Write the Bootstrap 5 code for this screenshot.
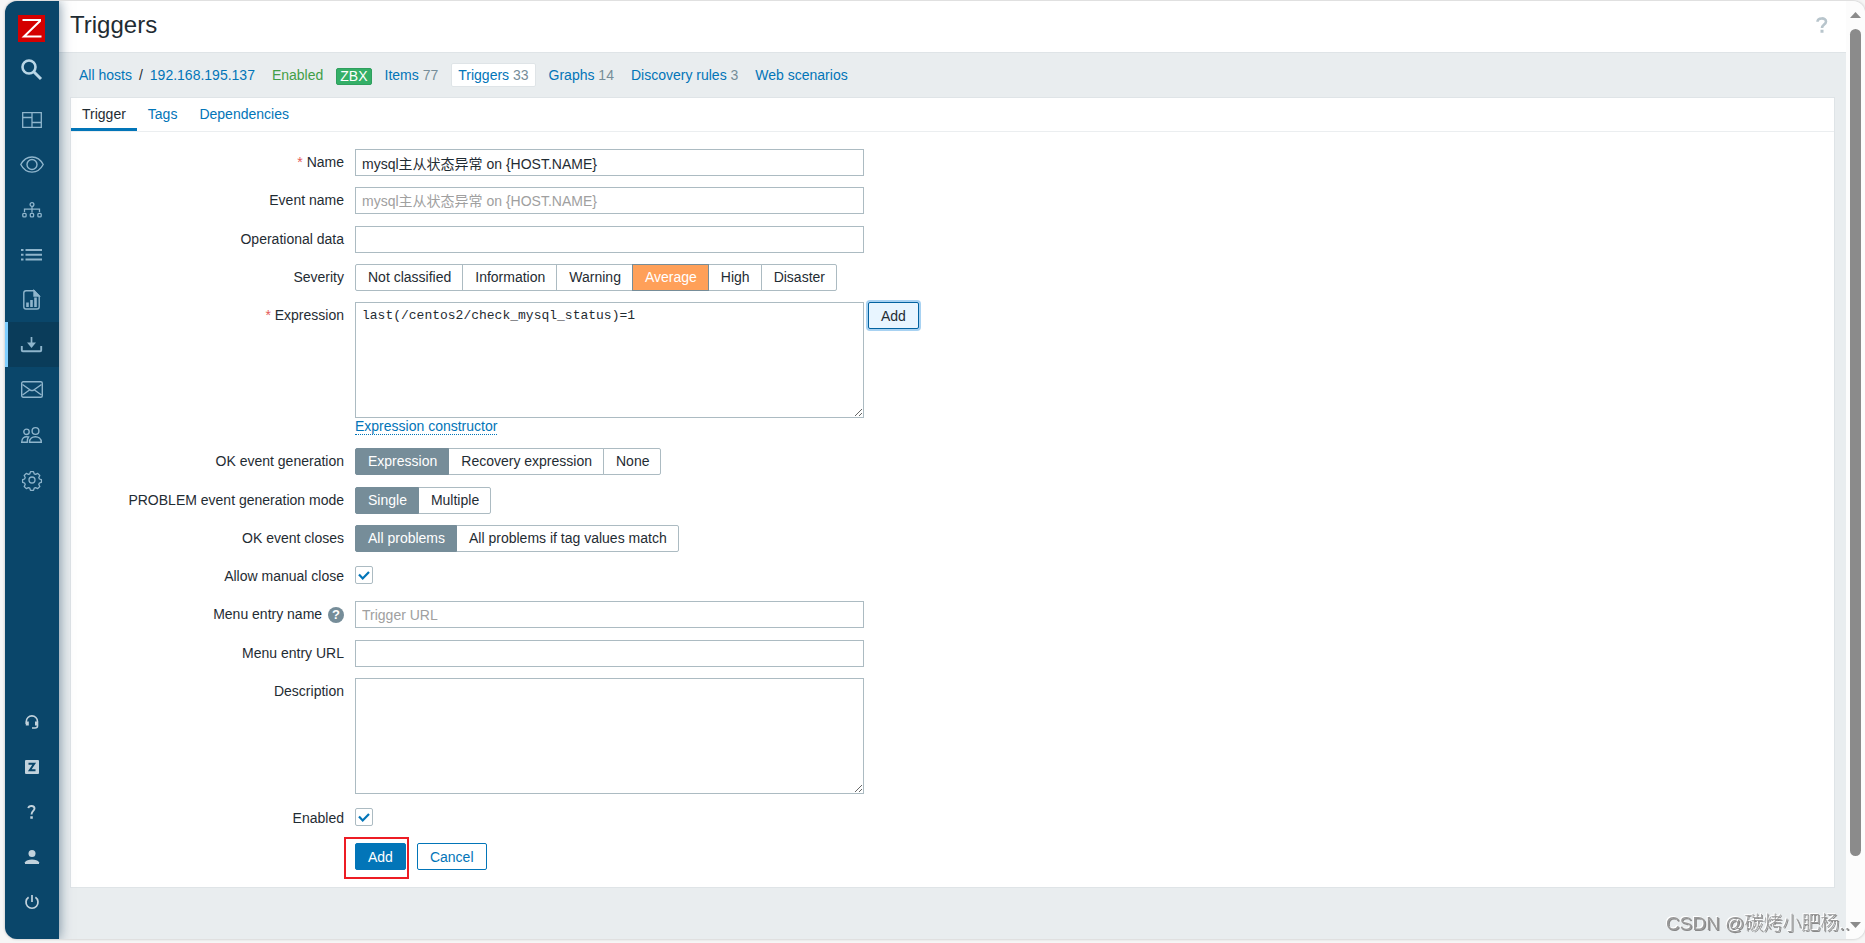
<!DOCTYPE html>
<html lang="en">
<head>
<meta charset="utf-8">
<meta name="viewport" content="width=device-width, initial-scale=1">
<title>Triggers</title>
<link href="https://cdn.jsdelivr.net/npm/bootstrap@5.3.0/dist/css/bootstrap.min.css" rel="stylesheet">
<style>
:root{--zx-blue:#0275b8;--zx-line:#acbbc2;--zx-text:#1f2c33;--zx-bg:#e9edef}
body{background:#f6f6f6;font-family:"Liberation Sans","Noto Sans CJK SC",sans-serif;font-size:14px;line-height:18px;color:var(--zx-text);overflow:hidden}
a{color:var(--zx-blue);text-decoration:none}
.zx-shell{padding:1px 0 4px 5px}
.zx-window{border-radius:12px;overflow:hidden;box-shadow:0 0 3px rgba(0,0,0,.25);background:var(--zx-bg)}
.zx-side{width:54px;flex:none;background:#0a466a;color:#8fb5cc;box-shadow:0 0 12px rgba(10,50,80,.55);z-index:2;padding:14px 0 15px}
.zx-side a{height:45px;color:inherit;display:flex;align-items:center;justify-content:center;border-left:3px solid transparent;padding-right:4px}
.zx-side a.active{background:#0a3c5a;border-left-color:#80cfff}
.zx-side a.zx-logo{height:27px}
.zx-side a.zx-find{height:55px;color:#b9d6e6}
.zx-side svg{display:block;overflow:visible}
.zx-low{color:#c2d2dc}
.zx-main-col{min-width:0}
.zx-head{height:52px;border-bottom:1px solid #dfe4e7;background:#fff;padding:0 18px 4px 11px}
.zx-head h1{font-size:24px;line-height:30px;font-weight:400}
.zx-crumbs{height:44px;padding:0 16px 0 16px;gap:9px}
.zx-crumbs>a,.zx-crumbs>span{padding:2px 3px;border:1px solid transparent}
.zx-path{gap:7px}
.zx-crumbs .zx-on{background:#fff;border:1px solid #dfe4e7;border-radius:2px;padding:2px 6px}
.zx-num{color:#768d99}
.zx-green{color:#429e47}
.zx-crumbs>.zx-zbx{background:#34af67;border:1px solid #2f9f5e;border-radius:2px;color:#fff;line-height:15px;padding:0 3px;margin-top:3px}
.zx-panel{background:#fff;border:1px solid #dfe4e7;margin:0 11px 51px 11px;padding-bottom:17px}
.zx-tabs{border-bottom:1px solid #ebeef0;height:34px}
.zx-tabs .nav-link{padding:7px 11px 5px;color:var(--zx-blue);border-bottom:3px solid transparent}
.zx-tabs .nav-link.active{color:var(--zx-text);border-color:var(--zx-blue)}
.zx-form{padding-top:17px}
.zx-group{display:flex;flex-direction:column;gap:11px;margin-bottom:12px}
.zx-group:last-child{margin-bottom:0}
.zx-row{display:flex;gap:11px;align-items:flex-start}
.zx-row>.zx-lab{flex:0 0 273px;text-align:right;line-height:18px;padding:4px 0 5px}
.zx-star{color:#e45959}
.zx-field{width:509px;max-width:100%;height:27px;padding:3px 6px;font-size:14px;line-height:18px;border:1px solid var(--zx-line);border-radius:0;color:var(--zx-text);background:#fff}
.zx-field::placeholder{color:#a0a0a0;opacity:1}
textarea.zx-field{height:116px;display:block;resize:both;padding-top:4px}
.zx-code{font-family:"Liberation Mono",monospace;font-size:13px}
.zx-seg .btn{font-size:14px;line-height:18px;height:27px;padding:3px 11px 3px 12px;border:1px solid var(--zx-line);border-radius:2px;color:var(--zx-text);background:#fff}
.zx-seg .btn-check:checked+.btn{background:#768d99;border-color:#768d99;color:#fff}
.zx-seg .btn-check:checked+.btn.zx-avg{background:#ffa059;border-color:#768d99}
.zx-btn{font-size:14px;line-height:18px;height:27px;padding:3px 12px;border-radius:2px;border:1px solid var(--zx-blue);color:var(--zx-blue);background:#fff}
.zx-btn.zx-main{background:var(--zx-blue);color:#fff}
.zx-btn.zx-focus{background:#e8f5ff;border-color:#0262a0;color:var(--zx-text);box-shadow:0 0 0 2px #a8d2f2}
.zx-actions{gap:11px}
.zx-dots{display:block;width:fit-content;border-bottom:1px dotted var(--zx-blue);line-height:16px;margin-bottom:1px}
.zx-tick{appearance:none;width:18px;height:18px;margin:3px 0 6px;border:1px solid var(--zx-line);border-radius:2px;background:#fff}
.zx-tick:checked{background:#fff url("data:image/svg+xml,%3Csvg xmlns='http://www.w3.org/2000/svg' viewBox='0 0 16 16'%3E%3Cpath d='M3 7.5l3.700 4L13 5' fill='none' stroke='%230275b8' stroke-width='2.200'/%3E%3C/svg%3E") center/16px}
.zx-help{display:inline-block;width:16px;height:16px;line-height:16px;border-radius:50%;background:#768d99;color:#fff;font-weight:700;font-size:13px;text-align:center;margin-left:2px}
.zx-marked{position:relative}
.zx-marked::before{content:"";position:absolute;inset:-6px -3px -9px -11px;border:2px solid #ed1c24;pointer-events:none}
.zx-scroll{flex:none;width:19px;background:#fcfcfc;padding:11px 4px}
.zx-thumb{flex:0 1 827px;width:11px;margin-top:11px;border-radius:6px;background:#8b8b8b}
.zx-wm{position:fixed;right:15px;bottom:6px;font:300 19px/26px "Liberation Sans","Noto Sans CJK SC",sans-serif;color:#999;text-shadow:-1px -1px 0 #fff,1px 1px 0 #888;z-index:5}
</style>
</head>
<body>
<div class="zx-shell vh-100">
<div class="zx-window d-flex h-100">
  <nav class="zx-side d-flex flex-column" aria-label="Main">
    <a class="zx-logo" href="#" aria-label="Home"><svg width="27" height="27"><path fill="#d40000" d="M0 0h27v27H0z"/><path d="M4.500 5h17.500v1L6 21.500h17.500" fill="none" stroke="#fff" stroke-width="2"/></svg></a>
    <a class="zx-find" href="#" aria-label="Search"><svg width="21" height="21" fill="none" stroke="currentColor"><circle cx="8" cy="8" r="6.500" stroke-width="2.600"/><path d="M13 13l7 7" stroke-width="3"/></svg></a>
    <a href="#" aria-label="Dashboards"><svg width="20" height="16" fill="none" stroke="currentColor" stroke-width="1.300"><path d="M.7.700h18.600v14.600H.700zM10 .7v14.600M.7 5.500H10M10 10.500h9.300"/></svg></a>
    <a href="#" aria-label="Monitoring"><svg width="24" height="17" fill="none" stroke="currentColor" stroke-width="1.400"><path d="M.8 8.500C6-1.600 18-1.600 23.200 8.500 18 18.600 6 18.600.8 8.500z"/><circle cx="12" cy="8.500" r="5"/></svg></a>
    <a href="#" aria-label="Services"><svg width="20" height="16" fill="none" stroke="currentColor" stroke-width="1.300"><circle cx="10" cy="2.500" r="1.900"/><path d="M10 4.500v6M2.500 10V7.200h15V10"/><rect x=".8" y="11.300" width="3.300" height="3.600" rx="1"/><rect x="8.300" y="11.300" width="3.300" height="3.600" rx="1"/><rect x="15.900" y="11.300" width="3.300" height="3.600" rx="1"/></svg></a>
    <a href="#" aria-label="Inventory"><svg width="21" height="12" fill="currentColor"><path d="M0 0h2.500v2H0zM4.500 0H21v2H4.500zM0 4.700h2.500v2H0zM4.500 4.700H21v2H4.500zM0 9.500h2.500v2H0zM4.500 9.500H21v2H4.500z"/></svg></a>
    <a href="#" aria-label="Reports"><svg width="17" height="20" fill="none" stroke="currentColor" stroke-width="1.400"><path d="M11 .8H3Q.8.800.8 3v13.800Q.8 19 3 19h11q2.200 0 2.200-2.200V6z"/><path d="M11 .8V6h5.200z" fill="currentColor"/><path d="M4.500 12.500v4.500M8.500 10v7M12.500 7.500V17" stroke-width="2.600"/></svg></a>
    <a class="active" href="#" aria-label="Data collection"><svg width="21" height="16" fill="none" stroke="currentColor"><path d="M.8 9v4.300q0 1 1 1h17.400q1 0 1-1V9" stroke-width="1.900"/><path d="M10.500 0v7" stroke-width="1.700"/><path d="M6 5.500h9l-4.500 5.500z" fill="currentColor" stroke="none"/></svg></a>
    <a href="#" aria-label="Alerts"><svg width="22" height="17" fill="none" stroke="currentColor" stroke-width="1.400"><rect x=".7" y=".7" width="20.600" height="15.600" rx="1.500"/><path d="M1.500 3.500l8.500 6h2l8.500-6M1.500 14l7-5M20.500 14l-7-5"/></svg></a>
    <a href="#" aria-label="Users"><svg width="21" height="16" fill="none" stroke="currentColor" stroke-width="1.400"><circle cx="14.500" cy="4" r="3.400"/><circle cx="5.500" cy="4.800" r="2.700"/><path d="M8.500 15.200C8.500 8 20.300 8 20.300 15.200zM7.500 10C3 9.200.7 11 .7 15.200h5.500q0-3.500 1.300-5.200z"/></svg></a>
    <a href="#" aria-label="Administration"><svg width="18" height="18" viewBox="-9 -9 18 18" fill="none" stroke="currentColor" stroke-width="1.300" stroke-linejoin="round"><circle r="3"/><path d="M-1.500-8.400h3l.7 2.200 1.400.6 2.100-1 2.100 2.100-1 2 .6 1.500 2 .7v2.600l-2 .7-.6 1.500 1 2-2.100 2.100-2.100-1-1.400.6-.7 2.200h-3l-.7-2.200-1.400-.6-2.100 1-2.100-2.100 1-2-.6-1.500-2-.7v-2.600l2-.7.6-1.500-1-2 2.100-2.100 2.100 1 1.400-.6z"/></svg></a>
    <div class="zx-low mt-auto">
      <a href="#" aria-label="Support"><svg width="14" height="14" fill="none" stroke="currentColor" stroke-width="1.600"><path d="M1.300 9V6.500a5.500 5.500 0 0 1 11.200 0V11q0 2-2.500 2H7"/><path d="M2.300 6.500v4M11.500 6.500v4" stroke-width="3"/></svg></a>
      <a href="#" aria-label="Integrations"><svg width="14" height="14"><rect width="14" height="14" rx="1" fill="currentColor"/><path d="M3.500 3.800h5.700L4.800 10.300h5.700" fill="none" stroke="#0a466a" stroke-width="2"/></svg></a>
      <a href="#" aria-label="Help"><svg width="9" height="14" fill="none" stroke="currentColor" stroke-width="1.900"><path d="M1.300 3.200C1.800.3 7.500.2 7.500 3.600 7.500 6 4.500 6 4.500 9.500"/><path d="M3.300 12.500h2.500" stroke-width="2.400"/></svg></a>
      <a href="#" aria-label="User profile"><svg width="14" height="14" fill="currentColor"><circle cx="7" cy="3.500" r="3.500"/><path d="M0 14v-1.800C1.500 8.500 12.500 8.500 14 12.200V14z"/></svg></a>
      <a href="#" aria-label="Sign out"><svg width="14" height="14" fill="none" stroke="currentColor" stroke-width="1.700"><path d="M7 0v7M3.600 2.300a6 6 0 1 0 6.800 0"/></svg></a>
    </div>
  </nav>

  <main class="zx-main-col flex-grow-1">
    <header class="zx-head d-flex align-items-center justify-content-between">
      <h1 class="m-0">Triggers</h1>
      <a href="#" aria-label="Help"><svg class="d-block" width="12" height="16" fill="none" stroke="#b8c5cc" stroke-width="2.600"><path d="M1.500 4.800C1.500.4 10 .3 10 4.500 10 7.500 6 7.500 6 11"/><path d="M4.500 14.300h3" stroke-width="3"/></svg></a>
    </header>
    <div class="zx-crumbs d-flex align-items-center">
      <span class="zx-path d-flex"><a href="#">All hosts</a><span>/</span><a href="#">192.168.195.137</a></span>
      <span class="zx-green">Enabled</span>
      <span class="zx-zbx">ZBX</span>
      <a href="#">Items <span class="zx-num">77</span></a>
      <a href="#" class="zx-on">Triggers <span class="zx-num">33</span></a>
      <a href="#">Graphs <span class="zx-num">14</span></a>
      <a href="#">Discovery rules <span class="zx-num">3</span></a>
      <a href="#">Web scenarios</a>
    </div>
    <section class="zx-panel">
      <nav class="zx-tabs nav">
        <a class="nav-link active" href="#">Trigger</a>
        <a class="nav-link" href="#">Tags</a>
        <a class="nav-link" href="#">Dependencies</a>
      </nav>
      <form class="zx-form">
        <div class="zx-group">
          <div class="zx-row"><label class="zx-lab" for="name"><span class="zx-star">*</span> Name</label><input class="zx-field" id="name" type="text" value="mysql主从状态异常 on {HOST.NAME}"></div>
          <div class="zx-row"><label class="zx-lab" for="event">Event name</label><input class="zx-field" id="event" type="text" placeholder="mysql主从状态异常 on {HOST.NAME}"></div>
        </div>
        <div class="zx-group">
          <div class="zx-row"><label class="zx-lab" for="opdata">Operational data</label><input class="zx-field" id="opdata" type="text"></div>
          <div class="zx-row"><span class="zx-lab" id="l-sev">Severity</span>
            <div class="btn-group zx-seg" role="group" aria-labelledby="l-sev">
              <input class="btn-check" type="radio" name="sev" id="s0"><label class="btn" for="s0">Not classified</label>
              <input class="btn-check" type="radio" name="sev" id="s1"><label class="btn" for="s1">Information</label>
              <input class="btn-check" type="radio" name="sev" id="s2"><label class="btn" for="s2">Warning</label>
              <input class="btn-check" type="radio" name="sev" id="s3" checked><label class="btn zx-avg" for="s3">Average</label>
              <input class="btn-check" type="radio" name="sev" id="s4"><label class="btn" for="s4">High</label>
              <input class="btn-check" type="radio" name="sev" id="s5"><label class="btn" for="s5">Disaster</label>
            </div></div>
          <div class="zx-row"><label class="zx-lab" for="expr"><span class="zx-star">*</span> Expression</label>
            <div>
              <div class="d-flex align-items-start gap-1"><textarea class="zx-field zx-code" id="expr">last(/centos2/check_mysql_status)=1</textarea><button class="zx-btn zx-focus" type="button">Add</button></div>
              <a class="zx-dots" href="#">Expression constructor</a>
            </div></div>
        </div>
        <div class="zx-group">
          <div class="zx-row"><span class="zx-lab" id="l-ok">OK event generation</span>
            <div class="btn-group zx-seg" role="group" aria-labelledby="l-ok">
              <input class="btn-check" type="radio" name="ok" id="o0" checked><label class="btn" for="o0">Expression</label>
              <input class="btn-check" type="radio" name="ok" id="o1"><label class="btn" for="o1">Recovery expression</label>
              <input class="btn-check" type="radio" name="ok" id="o2"><label class="btn" for="o2">None</label>
            </div></div>
        </div>
        <div class="zx-group">
          <div class="zx-row"><span class="zx-lab" id="l-pm">PROBLEM event generation mode</span>
            <div class="btn-group zx-seg" role="group" aria-labelledby="l-pm">
              <input class="btn-check" type="radio" name="pm" id="p0" checked><label class="btn" for="p0">Single</label>
              <input class="btn-check" type="radio" name="pm" id="p1"><label class="btn" for="p1">Multiple</label>
            </div></div>
          <div class="zx-row"><span class="zx-lab" id="l-cl">OK event closes</span>
            <div class="btn-group zx-seg" role="group" aria-labelledby="l-cl">
              <input class="btn-check" type="radio" name="cl" id="c0" checked><label class="btn" for="c0">All problems</label>
              <input class="btn-check" type="radio" name="cl" id="c1"><label class="btn" for="c1">All problems if tag values match</label>
            </div></div>
          <div class="zx-row"><label class="zx-lab" for="manual">Allow manual close</label><input class="zx-tick" id="manual" type="checkbox" checked></div>
          <div class="zx-row"><label class="zx-lab" for="mname">Menu entry name <span class="zx-help">?</span></label><input class="zx-field" id="mname" type="text" placeholder="Trigger URL"></div>
        </div>
        <div class="zx-group">
          <div class="zx-row"><label class="zx-lab" for="murl">Menu entry URL</label><input class="zx-field" id="murl" type="text"></div>
          <div class="zx-row"><label class="zx-lab" for="descr">Description</label><textarea class="zx-field" id="descr"></textarea></div>
          <div class="zx-row"><label class="zx-lab" for="enabled">Enabled</label><input class="zx-tick" id="enabled" type="checkbox" checked></div>
          <div class="zx-row"><span class="zx-lab"></span><div class="zx-actions d-flex"><span class="zx-marked"><button class="zx-btn zx-main d-block" type="submit">Add</button></span><button class="zx-btn" type="button">Cancel</button></div></div>
        </div>
      </form>
    </section>
  </main>
  <div class="zx-scroll d-flex flex-column align-items-center" aria-hidden="true">
    <svg width="11" height="6" fill="#8b8b8b"><path d="M5.500 0L11 6H0z"/></svg>
    <div class="zx-thumb"></div>
    <svg class="mt-auto" width="11" height="6" fill="#8b8b8b"><path d="M5.500 6L11 0H0z"/></svg>
  </div>
</div>
</div>
<div class="zx-wm">CSDN @碳烤小肥杨..</div>
<script src="https://cdn.jsdelivr.net/npm/bootstrap@5.3.0/dist/js/bootstrap.bundle.min.js"></script>
</body>
</html>
